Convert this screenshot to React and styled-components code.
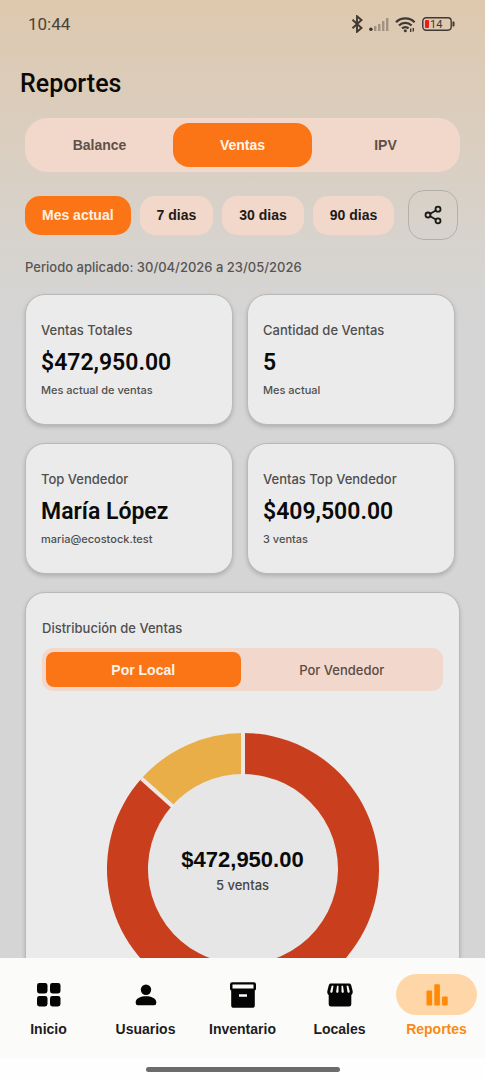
import { useState } from "react";
import styled, { createGlobalStyle } from "styled-components";
import { Share2 } from "lucide-react";

const GlobalStyle = createGlobalStyle`
	* {
		box-sizing: border-box;
	}

	body {
		margin: 0;
		font-family: Inter, "Liberation Sans", sans-serif;
		font-size: 13px;
		font-weight: 500;
		line-height: 20px;
		color: #0d0d0d;
	}

	button {
		border: none;
		padding: 0;
		font: inherit;
		color: inherit;
		background: none;
		cursor: pointer;
	}

	h1, h2, p {
		margin: 0;
	}
`;

const boldFont = `
	font-family: "Liberation Sans", Arial, sans-serif;
	font-size: 14px;
	font-weight: bold;
`;

const Screen = styled.div`
	display: flex;
	flex-direction: column;
	height: 100vh;
	background: linear-gradient(#dec8ae 0, #ddcab4 40px, #dbcdbc 110px, #d6d4d1 270px, #d5d5d5 330px);
`;

const StatusBar = styled.div`
	display: flex;
	flex-shrink: 0;
	justify-content: space-between;
	align-items: center;
	height: 48px;
	padding: 0 30px 0 28px;
	font-family: Roboto, sans-serif;
	font-size: 17px;
	font-weight: 400;
	color: #4b4339;
`;

const StatusIcons = styled.div`
	display: flex;
	align-items: center;
	gap: 5px;
	color: #3f3931;
`;

const Header = styled.header`
	flex-shrink: 0;
	padding: 20px 20px 18px;
`;

const Title = styled.h1`
	font-family: Roboto, sans-serif;
	font-size: 25px;
	font-weight: 500;
	line-height: 32px;
	color: #0b0907;
`;

const Content = styled.main`
	flex: 1;
	min-height: 0;
	padding: 0 25px 24px;
	overflow-y: auto;
	scrollbar-width: none;
`;

const Tabs = styled.div`
	display: flex;
	gap: 4px;
	padding: 5px;
	border-radius: 22px;
	background-color: #f1d8cb;
`;

const Tab = styled.button`
	${boldFont}
	flex: 1;
	height: 44px;
	border-radius: 16px;
	color: ${({ $active }) => ($active ? "#fff5ec" : "#5f5049")};
	background-color: ${({ $active }) => ($active ? "#fb7516" : "transparent")};
`;

const FilterRow = styled.div`
	display: flex;
	align-items: center;
	justify-content: space-between;
	margin: 18px 0 17px;
	padding-right: 2px;
`;

const Filters = styled.div`
	display: flex;
	gap: 9px;
`;

const Chip = styled.button`
	${boldFont}
	height: 39px;
	padding: 0 17px;
	border-radius: 15px;
	white-space: nowrap;
	color: ${({ $active }) => ($active ? "#fff0e2" : "#211a17")};
	background-color: ${({ $active }) => ($active ? "#fb7516" : "#f1d8cb")};
`;

const ShareButton = styled.button`
	display: flex;
	flex-shrink: 0;
	justify-content: center;
	align-items: center;
	width: 50px;
	height: 50px;
	border: 1px solid #b3b0ac;
	border-radius: 16px;
	color: #1b1a19;
`;

const Period = styled.p`
	margin-bottom: 17px;
	color: #585553;
`;

const CardGrid = styled.section`
	display: grid;
	grid-template-columns: 1fr 1fr;
	gap: 18px 14px;
	padding-right: 5px;
	margin-bottom: 18px;
`;

const Card = styled.article`
	padding: 25px 15px 24px;
	border: 1px solid #b9b9b9;
	border-radius: 20px;
	background-color: #ebebeb;
	box-shadow: 0 2px 4px rgba(0, 0, 0, 0.18);
`;

const CardLabel = styled.h2`
	font-size: 13px;
	font-weight: 500;
	color: #4f4f4f;
`;

const CardValue = styled.p`
	margin: 7px 0 1px;
	font-family: Roboto, sans-serif;
	font-size: 23px;
	font-weight: 600;
	line-height: 32px;
	color: #0a0a0a;
`;

const CardNote = styled.p`
	font-size: 11px;
	color: #4f4f4f;
`;

const Panel = styled.section`
	padding: 25px 16px 24px;
	border: 1px solid #b9b9b9;
	border-radius: 20px;
	background-color: #ebebeb;
	box-shadow: 0 2px 4px rgba(0, 0, 0, 0.18);
`;

const Segments = styled.div`
	display: flex;
	gap: 4px;
	margin: 10px 0 42px;
	padding: 4px;
	border-radius: 11px;
	background-color: #f2d8cc;
`;

const Segment = styled.button`
	${({ $active }) => $active && boldFont}
	flex: 1;
	height: 35px;
	border-radius: 8px;
	color: ${({ $active }) => ($active ? "#fff3e8" : "#5b4b44")};
	background-color: ${({ $active }) => ($active ? "#fb7516" : "transparent")};
`;

const ChartBox = styled.div`
	display: grid;
	justify-items: center;
	align-items: center;

	> * {
		grid-area: 1 / 1;
	}
`;

const ChartTotal = styled.div`
	padding-top: 4px;
	text-align: center;
	color: #454545;
`;

const TotalValue = styled.p`
	margin-bottom: 2px;
	font-family: "Liberation Sans", Arial, sans-serif;
	font-size: 22px;
	font-weight: bold;
	line-height: 26px;
	color: #0a0a0a;
`;

const BottomNav = styled.nav`
	display: flex;
	flex-shrink: 0;
	height: 100px;
	padding-top: 16px;
	background-color: #fbfbf9;
`;

const NavLink = styled.a`
	${boldFont}
	display: flex;
	flex: 1;
	flex-direction: column;
	align-items: center;
	gap: 4px;
	text-decoration: none;
	color: ${({ $active }) => ($active ? "#fb8a14" : "#1d1d1d")};
`;

const NavIcon = styled.span`
	display: flex;
	justify-content: center;
	align-items: center;
	width: 81px;
	height: 41px;
	border-radius: 21px;
	background-color: ${({ $active }) => ($active ? "#ffd6a8" : "transparent")};
	color: ${({ $active }) => ($active ? "#ff8a05" : "#050505")};
`;

const HomeIndicator = styled.div`
	display: flex;
	flex-shrink: 0;
	justify-content: center;
	align-items: center;
	height: 22px;
	background-color: #fefefe;

	&::after {
		content: "";
		width: 40%;
		height: 5px;
		border-radius: 3px;
		background-color: #6c6c6c;
	}
`;

const stats = [
	{ label: "Ventas Totales", value: "$472,950.00", note: "Mes actual de ventas" },
	{ label: "Cantidad de Ventas", value: "5", note: "Mes actual" },
	{ label: "Top Vendedor", value: "María López", note: "maria@ecostock.test" },
	{ label: "Ventas Top Vendedor", value: "$409,500.00", note: "3 ventas" },
];

const slices = [
	{ amount: 409500, color: "#c93f1e" },
	{ amount: 63450, color: "#e9ae47" },
];

const Icon = ({ children }) => (
	<svg width="28" height="28" viewBox="0 0 28 28" fill="currentColor" aria-hidden="true">
		{children}
	</svg>
);

const navItems = [
	{
		name: "Inicio",
		icon: (
			<Icon>
				<rect x="2" y="2" width="10.500" height="10.500" rx="2.400" />
				<rect x="15" y="2" width="10.500" height="10.500" rx="2.400" />
				<rect x="2" y="15" width="10.500" height="10.500" rx="2.400" />
				<rect x="15" y="15" width="10.500" height="10.500" rx="2.400" />
			</Icon>
		),
	},
	{
		name: "Usuarios",
		icon: (
			<Icon>
				<circle cx="14" cy="8.800" r="5.200" />
				<path d="M3.700 21.200c0-4 5.600-5.900 10.300-5.900s10.300 1.900 10.300 5.900v.8a2.200 2.200 0 0 1-2.200 2.200H5.900A2.200 2.200 0 0 1 3.700 22z" />
			</Icon>
		),
	},
	{
		name: "Inventario",
		icon: (
			<Icon>
				<path
					fillRule="evenodd"
					d="M3.200 1.200h21.600A2.200 2.200 0 0 1 27 3.400v4.200c0 .9-.5 1.600-1.200 2v14.600a2.600 2.600 0 0 1-2.600 2.600H4.800a2.600 2.600 0 0 1-2.600-2.600V9.600C1.500 9.200 1 8.500 1 7.600V3.400A2.200 2.200 0 0 1 3.200 1.200zM3.500 3.400v4.200h21V3.400zM10 13.300v2.500h8v-2.500z"
				/>
			</Icon>
		),
	},
	{
		name: "Locales",
		icon: (
			<Icon>
				<path
					fillRule="evenodd"
					d="M5 2.500h18c1.100 0 1.900.7 2.200 1.700l1.400 5.600c.4 1.900-.1 3.300-1.300 4.300v9.100a2.400 2.400 0 0 1-2.400 2.400H5.100a2.400 2.400 0 0 1-2.400-2.400v-9.100c-1.200-1-1.700-2.400-1.300-4.300l1.400-5.600c.3-1 1.100-1.700 2.200-1.700zM5.700 4.700L4.300 10.200c-.2.900.3 1.500 1 1.500s1.200-.5 1.300-1.300l.9-5.700zM11 4.700l-.8 5.700c-.1.800.4 1.300 1.100 1.300s1.200-.5 1.200-1.300V4.700zM15.500 4.700v5.700c0 .8.5 1.300 1.200 1.300s1.200-.5 1.100-1.300l-.8-5.700zM20.500 4.700l.9 5.700c.1.800.6 1.300 1.300 1.300s1.200-.6 1-1.500l-1.400-5.500z"
				/>
			</Icon>
		),
	},
	{
		name: "Reportes",
		icon: (
			<Icon>
				<rect x="3.500" y="9.500" width="5.600" height="15" rx="1" />
				<rect x="11.300" y="3.200" width="5.600" height="21.300" rx="1" />
				<rect x="19.100" y="15.500" width="5.600" height="9" rx="1" />
			</Icon>
		),
	},
];

const Status = () => (
	<StatusIcons>
		<svg width="13" height="18" viewBox="0 0 13 18" fill="none" stroke="currentColor" strokeWidth="1.900">
			<path d="M1.500 4.700l9 8.300-4.500 3.800V1.200L10.500 5l-9 8.300" />
		</svg>
		<svg width="21" height="16" viewBox="0 0 21 16" fill="#a3927f">
			<circle cx="1.900" cy="13.200" r="1.700" fill="#3a332c" />
			<rect x="5" y="10" width="2.400" height="5" />
			<rect x="9" y="8" width="2.400" height="7" />
			<rect x="13" y="5" width="2.400" height="10" />
			<rect x="17" y="2" width="2.400" height="13" />
		</svg>
		<svg width="21" height="17" viewBox="0 0 21 17" fill="none" stroke="currentColor" strokeWidth="2.300">
			<path d="M1 6.200a13.300 13.300 0 0 1 18.600 0" />
			<path d="M4 9.500a9 9 0 0 1 12.600 0" />
			<path d="M7 12.400a5 5 0 0 1 6.600 0" />
			<circle cx="10.300" cy="14.700" r="1.500" fill="currentColor" stroke="none" />
			<path d="M15.700 12.500v3.500M18.300 12v3.500" strokeWidth="1.400" />
		</svg>
		<svg width="34" height="16" viewBox="0 0 34 16">
			<rect x="1.800" y="1.800" width="28.400" height="12.400" rx="3.400" fill="none" stroke="currentColor" strokeWidth="1.400" />
			<rect x="4" y="4" width="4" height="8" rx="1" fill="#ea1c1c" />
			<path d="M31.500 5.500h1a1 1 0 0 1 1 1v3a1 1 0 0 1-1 1h-1z" fill="currentColor" />
			<text x="9" y="12" fontFamily="Roboto, sans-serif" fontSize="11" fontWeight="400" fill="currentColor">
				14
			</text>
		</svg>
	</StatusIcons>
);

const slicePath = (start, end) => {
	const point = (turn, radius) => {
		const angle = turn * 2 * Math.PI;
		return `${136 + radius * Math.sin(angle)} ${136 - radius * Math.cos(angle)}`;
	};
	const large = end - start > 0.5 ? 1 : 0;

	return `M${point(start, 136)} A136 136 0 ${large} 1 ${point(end, 136)} L${point(end, 95)} A95 95 0 ${large} 0 ${point(start, 95)} Z`;
};

const Donut = () => {
	const total = slices.reduce((sum, slice) => sum + slice.amount, 0);
	let from = 0;

	const parts = slices.map(({ amount, color }) => {
		const start = from;
		from += amount / total;
		return { start, end: from, color };
	});

	return (
		<svg width="272" height="272" viewBox="0 0 272 272" role="img" aria-label="Distribución de ventas por local">
			<circle cx="136" cy="136" r="95" fill="#e6e6e6" />
			{parts.map(({ start, end, color }) => (
				<path key={color} d={slicePath(start, end)} fill={color} />
			))}
			{parts.map(({ start, color }) => (
				<line
					key={color}
					x1="136"
					y1="0"
					x2="136"
					y2="42"
					stroke="#efe9e6"
					strokeWidth="4"
					transform={`rotate(${start * 360} 136 136)`}
				/>
			))}
		</svg>
	);
};

const App = () => {
	const [tab, setTab] = useState("Ventas");
	const [filter, setFilter] = useState("Mes actual");
	const [group, setGroup] = useState("Por Local");

	return (
		<Screen>
			<GlobalStyle />
			<StatusBar>
				<span>10:44</span>
				<Status />
			</StatusBar>
			<Header>
				<Title>Reportes</Title>
			</Header>
			<Content>
				<Tabs>
					{["Balance", "Ventas", "IPV"].map((name) => (
						<Tab key={name} $active={name === tab} onClick={() => setTab(name)}>
							{name}
						</Tab>
					))}
				</Tabs>
				<FilterRow>
					<Filters>
						{["Mes actual", "7 dias", "30 dias", "90 dias"].map((name) => (
							<Chip key={name} $active={name === filter} onClick={() => setFilter(name)}>
								{name}
							</Chip>
						))}
					</Filters>
					<ShareButton aria-label="Compartir">
						<Share2 size={20} strokeWidth={2.2} />
					</ShareButton>
				</FilterRow>
				<Period>Periodo aplicado: 30/04/2026 a 23/05/2026</Period>
				<CardGrid>
					{stats.map(({ label, value, note }) => (
						<Card key={label}>
							<CardLabel>{label}</CardLabel>
							<CardValue>{value}</CardValue>
							<CardNote>{note}</CardNote>
						</Card>
					))}
				</CardGrid>
				<Panel>
					<CardLabel>Distribución de Ventas</CardLabel>
					<Segments>
						{["Por Local", "Por Vendedor"].map((name) => (
							<Segment key={name} $active={name === group} onClick={() => setGroup(name)}>
								{name}
							</Segment>
						))}
					</Segments>
					<ChartBox>
						<Donut />
						<ChartTotal>
							<TotalValue>$472,950.00</TotalValue>
							<p>5 ventas</p>
						</ChartTotal>
					</ChartBox>
				</Panel>
			</Content>
			<BottomNav>
				{navItems.map(({ name, icon }) => (
					<NavLink key={name} href={`#${name.toLowerCase()}`} $active={name === "Reportes"}>
						<NavIcon $active={name === "Reportes"}>{icon}</NavIcon>
						{name}
					</NavLink>
				))}
			</BottomNav>
			<HomeIndicator />
		</Screen>
	);
};

export default App;
